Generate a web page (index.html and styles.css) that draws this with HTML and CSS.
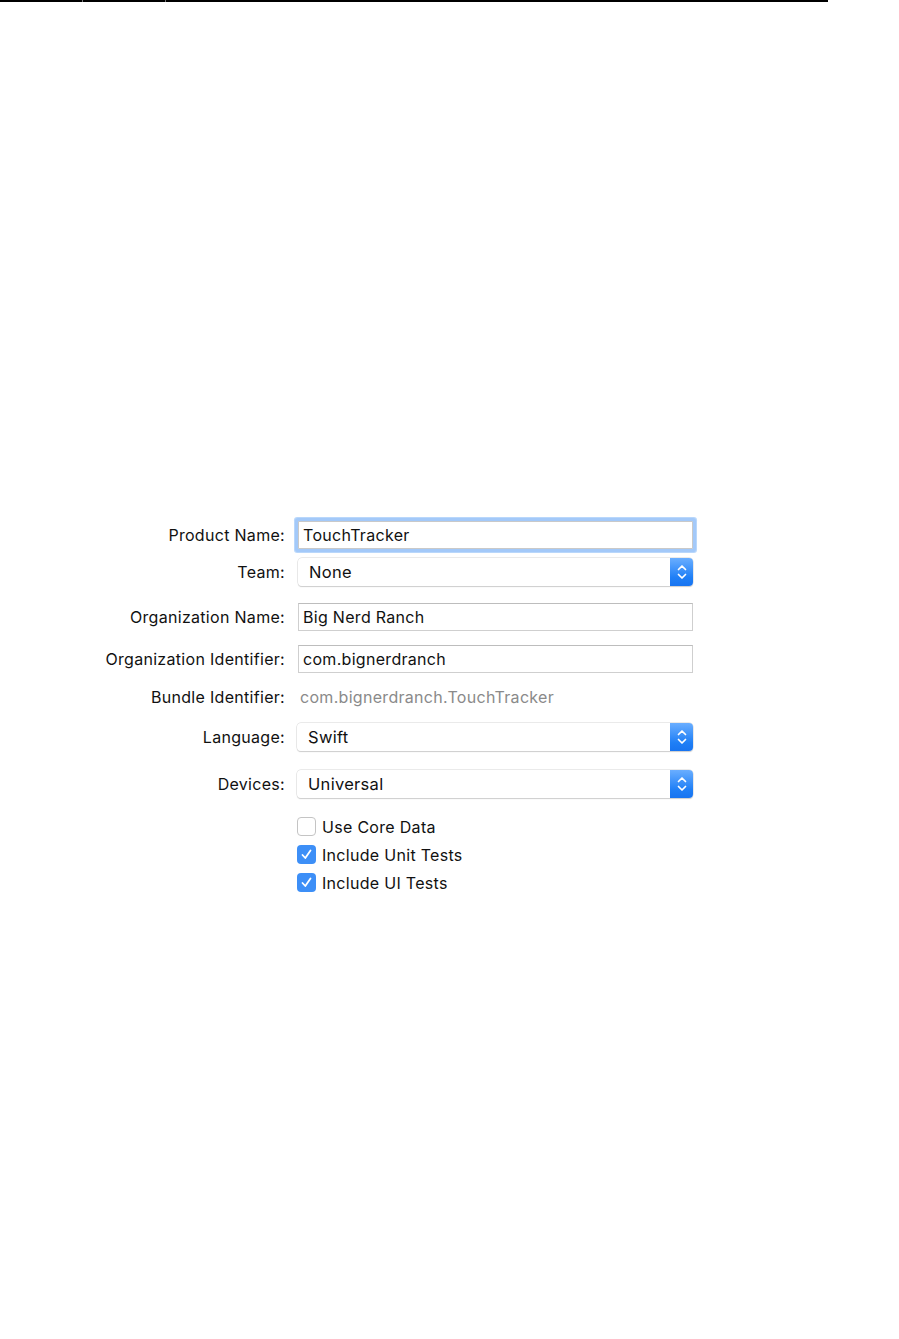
FILE: index.html
```html
<!DOCTYPE html>
<html>
<head>
<meta charset="utf-8">
<link rel="stylesheet" href="styles.css">
</head>
<body>
<div class="topline"></div>
<form class="form">
  <div class="row r-product">
    <label class="lbl">Product Name:</label>
    <div class="field focus"><span>TouchTracker</span></div>
  </div>
  <div class="row r-team">
    <label class="lbl">Team:</label>
    <div class="popup"><span>None</span><span class="stepper"><svg width="12" height="20" viewBox="0 0 12 20"><path d="M2.5 7.5 L6 4 L9.5 7.5 M2.5 12.5 L6 16 L9.5 12.5" fill="none" stroke="#fff" stroke-width="1.7" stroke-linecap="round" stroke-linejoin="round"/></svg></span></div>
  </div>
  <div class="row r-org">
    <label class="lbl">Organization Name:</label>
    <div class="field"><span>Big Nerd Ranch</span></div>
  </div>
  <div class="row r-orgid">
    <label class="lbl">Organization Identifier:</label>
    <div class="field"><span>com.bignerdranch</span></div>
  </div>
  <div class="row r-bundle">
    <label class="lbl">Bundle Identifier:</label>
    <div class="static">com.bignerdranch.TouchTracker</div>
  </div>
  <div class="row r-lang">
    <label class="lbl">Language:</label>
    <div class="popup wide"><span>Swift</span><span class="stepper"><svg width="12" height="20" viewBox="0 0 12 20"><path d="M2.5 7.5 L6 4 L9.5 7.5 M2.5 12.5 L6 16 L9.5 12.5" fill="none" stroke="#fff" stroke-width="1.7" stroke-linecap="round" stroke-linejoin="round"/></svg></span></div>
  </div>
  <div class="row r-dev">
    <label class="lbl">Devices:</label>
    <div class="popup wide"><span>Universal</span><span class="stepper"><svg width="12" height="20" viewBox="0 0 12 20"><path d="M2.5 7.5 L6 4 L9.5 7.5 M2.5 12.5 L6 16 L9.5 12.5" fill="none" stroke="#fff" stroke-width="1.7" stroke-linecap="round" stroke-linejoin="round"/></svg></span></div>
  </div>
  <div class="checks">
    <div class="check"><span class="box"></span><span>Use Core Data</span></div>
    <div class="check"><span class="box on"><svg width="13" height="13" viewBox="0 0 13 13"><path d="M2.5 7 L5.3 10 L10.5 2.5" fill="none" stroke="#fff" stroke-width="1.8" stroke-linecap="round" stroke-linejoin="round"/></svg></span><span>Include Unit Tests</span></div>
    <div class="check"><span class="box on"><svg width="13" height="13" viewBox="0 0 13 13"><path d="M2.5 7 L5.3 10 L10.5 2.5" fill="none" stroke="#fff" stroke-width="1.8" stroke-linecap="round" stroke-linejoin="round"/></svg></span><span>Include UI Tests</span></div>
  </div>
</form>
</body>
</html>
```
FILE: styles.css
```css
* { box-sizing: border-box; }
html, body { margin: 0; padding: 0; background: #fff; }
body {
  font-family: Inter, "Liberation Sans", sans-serif;
  font-size: 16px;
  letter-spacing: 0.3px;
  color: #1a1a1a;
  width: 899px;
  height: 1339px;
}
.topline {
  width: 828px;
  height: 2px;
  background:
    linear-gradient(#777, #777) 82px 0 / 1px 2px no-repeat,
    linear-gradient(#777, #777) 165px 0 / 1px 2px no-repeat,
    #000;
}
.form {
  display: flex;
  flex-direction: column;
  padding-top: 519px;
}
.row {
  display: grid;
  grid-template-columns: 285px 404px;
  column-gap: 9px;
  align-items: center;
  height: 28px;
}
.lbl {
  text-align: right;
  white-space: nowrap;
  color: #111;
}
.r-team { margin-top: 9px; }
.r-org { margin-top: 17px; }
.r-orgid { margin-top: 14px; }
.r-bundle { margin-top: 10px; }
.r-lang { margin-top: 12px; }
.r-dev { margin-top: 19px; }

.field {
  margin-left: 4px;
  width: 395px;
  height: 28px;
  border: 1px solid #cfcfcf;
  border-top-color: #bdbdbd;
  background: #fff;
  display: flex;
  align-items: center;
  padding-left: 4px;
  color: #111;
}
.field.focus {
  border-color: #c9c9c9;
  box-shadow: 0 0 0 3px #a3c9f9, 0 0 0 4px #b9d7fb;
  border-radius: 1px;
}
.static {
  margin-left: 6px;
  color: #8a8a8a;
}
.popup {
  margin-left: 4px;
  width: 395px;
  height: 28px;
  border-radius: 4px;
  background: #fff;
  box-shadow: 0 0 0 0.5px #d6d6d6, 0 1px 1px rgba(0,0,0,0.22);
  display: flex;
  align-items: center;
  justify-content: space-between;
  padding-left: 11px;
  font-size: 16.5px;
  color: #111;
}
.popup.wide { margin-left: 3px; width: 396px; }
.stepper {
  width: 23px;
  height: 28px;
  border-radius: 0 4px 4px 0;
  background: linear-gradient(#6aaeff, #1f7ff6 70%, #1874f0);
  display: flex;
  align-items: center;
  justify-content: center;
}
.stepper svg { display: block; }
.checks {
  display: flex;
  flex-direction: column;
  gap: 9px;
  margin-top: 19px;
  padding-left: 297px;
}
.check {
  display: flex;
  align-items: center;
  gap: 6px;
  height: 19px;
  color: #111;
}
.box {
  width: 19px;
  height: 19px;
  border-radius: 4px;
  border: 1px solid #c4c4c4;
  background: #fff;
  display: flex;
  align-items: center;
  justify-content: center;
}
.box.on {
  border: none;
  background: #3d8ff7;
}
.box svg { display: block; }
```
